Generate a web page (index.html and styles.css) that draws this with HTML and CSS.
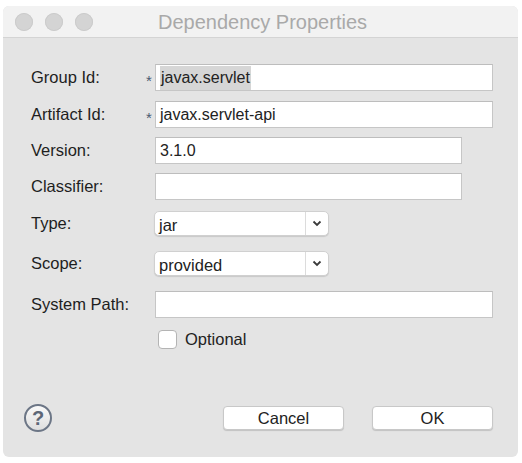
FILE: index.html
```html
<!DOCTYPE html>
<html>
<head>
<meta charset="utf-8">
<link rel="stylesheet" href="styles.css">
</head>
<body>
<div class="window">
  <div class="titlebar">
    <div class="lights">
      <span class="light"></span><span class="light"></span><span class="light"></span>
    </div>
    <div class="title">Dependency Properties</div>
  </div>
  <div class="content">
    <div class="row r1">
      <label class="lbl">Group Id:</label>
      <span class="deco">*</span>
      <div class="field wide"><span class="sel">javax.servlet</span></div>
    </div>
    <div class="row r2">
      <label class="lbl">Artifact Id:</label>
      <span class="deco">*</span>
      <div class="field wide">javax.servlet-api</div>
    </div>
    <div class="row r3">
      <label class="lbl">Version:</label>
      <span class="deco"></span>
      <div class="field medium">3.1.0</div>
    </div>
    <div class="row r4">
      <label class="lbl">Classifier:</label>
      <span class="deco"></span>
      <div class="field medium"></div>
    </div>
    <div class="row r5">
      <label class="lbl">Type:</label>
      <span class="deco"></span>
      <div class="combo"><span class="combo-text">jar</span><span class="combo-btn"><svg width="10" height="7" viewBox="0 0 10 7"><path d="M1.5 1.5 L5 5 L8.5 1.5" fill="none" stroke="#3a3a3a" stroke-width="1.8"/></svg></span></div>
    </div>
    <div class="row r6">
      <label class="lbl">Scope:</label>
      <span class="deco"></span>
      <div class="combo"><span class="combo-text">provided</span><span class="combo-btn"><svg width="10" height="7" viewBox="0 0 10 7"><path d="M1.5 1.5 L5 5 L8.5 1.5" fill="none" stroke="#3a3a3a" stroke-width="1.8"/></svg></span></div>
    </div>
    <div class="row r7">
      <label class="lbl">System Path:</label>
      <span class="deco"></span>
      <div class="field wide"></div>
    </div>
    <div class="row r8">
      <span class="lbl"></span>
      <span class="deco"></span>
      <div class="check"><span class="box"></span><span class="check-label">Optional</span></div>
    </div>
    <div class="footer">
      <div class="help">?</div>
      <div class="buttons">
        <div class="btn">Cancel</div>
        <div class="btn">OK</div>
      </div>
    </div>
  </div>
</div>
</body>
</html>
```
FILE: styles.css
```css
html, body {
  margin: 0;
  padding: 0;
  background: #ffffff;
}
body {
  width: 522px;
  height: 463px;
  font-family: "Liberation Sans", Arial, sans-serif;
  color: #222;
}
.window {
  margin: 6px 4px 0 3px;
  height: 451px;
  background: #e4e4e4;
  border-radius: 6px;
  display: flex;
  flex-direction: column;
  overflow: hidden;
}
.titlebar {
  height: 31px;
  background: #f2f2f2;
  border-bottom: 1px solid #d4d4d4;
  display: flex;
  align-items: center;
  position: relative;
}
.lights {
  display: flex;
  gap: 12px;
  padding-left: 12px;
}
.light {
  width: 18px;
  height: 18px;
  border-radius: 50%;
  background: #d4d4d4;
  box-shadow: inset 0 0 0 1px #cbcbcb;
}
.title {
  position: absolute;
  left: 0;
  right: 0;
  top: 0;
  height: 31px;
  line-height: 33px;
  text-align: center;
  font-size: 20px;
  color: #a9a9a9;
  padding-left: 4px;
}
.content {
  flex: 1;
  display: flex;
  flex-direction: column;
  padding-left: 28px;
}
.row {
  display: flex;
  align-items: center;
}
.r1 { margin-top: 26px; }
.r2 { margin-top: 10px; }
.r3 { margin-top: 9px; }
.r4 { margin-top: 9px; }
.r5 { margin-top: 11px; }
.r6 { margin-top: 15px; }
.r7 { margin-top: 15px; }
.r8 { margin-top: 12px; }
.lbl {
  width: 112px;
  font-size: 16.5px;
  color: #1e1e1e;
}
.deco {
  width: 12px;
  font-size: 15px;
  color: #4a5a70;
  text-align: center;
  line-height: 1;
  padding-top: 6px;
  align-self: center;
}
.field {
  height: 25px;
  background: #fff;
  border: 1px solid #c6c6c6;
  border-top-color: #bdbdbd;
  font-size: 16px;
  line-height: 25px;
  padding-left: 4px;
  box-sizing: content-box;
}
.wide { width: 332px; }
.medium { width: 301px; }
.sel {
  background: #d6d6d6;
  padding: 3px 1px 4px 1px;
}
.combo {
  margin-left: -1px;
  width: 173px;
  height: 23px;
  background: #fff;
  border: 1px solid #d0d0d0;
  border-radius: 5px;
  box-shadow: 0 1px 1px rgba(0,0,0,0.12);
  display: flex;
  align-items: stretch;
}
.combo-text {
  flex: 1;
  font-size: 16.5px;
  line-height: 27px;
  padding-left: 4px;
}
.combo-btn {
  width: 22px;
  border-left: 1px solid #dcdcdc;
  display: flex;
  align-items: center;
  justify-content: center;
}
.check {
  display: flex;
  align-items: center;
  gap: 8px;
  margin-left: 3px;
}
.box {
  width: 17px;
  height: 17px;
  background: #fff;
  border: 1px solid #b4b4b4;
  border-radius: 4px;
}
.check-label {
  font-size: 16.5px;
}
.footer {
  margin-top: 55px;
  display: flex;
  align-items: center;
  justify-content: space-between;
  padding-right: 25px;
}
.help {
  margin-left: -7px;
  width: 24px;
  height: 24px;
  border-radius: 50%;
  border: 2px solid #6c7686;
  background: linear-gradient(#fafafa, #dedede);
  color: #5d6777;
  font-weight: bold;
  font-size: 20px;
  line-height: 25px;
  text-align: center;
}
.buttons {
  display: flex;
  gap: 28px;
}
.btn {
  width: 119px;
  height: 22px;
  background: #fff;
  border: 1px solid #c8c8c8;
  border-radius: 4px;
  box-shadow: 0 1px 1px rgba(0,0,0,0.15);
  font-size: 16.5px;
  line-height: 23px;
  text-align: center;
  color: #222;
}
```
